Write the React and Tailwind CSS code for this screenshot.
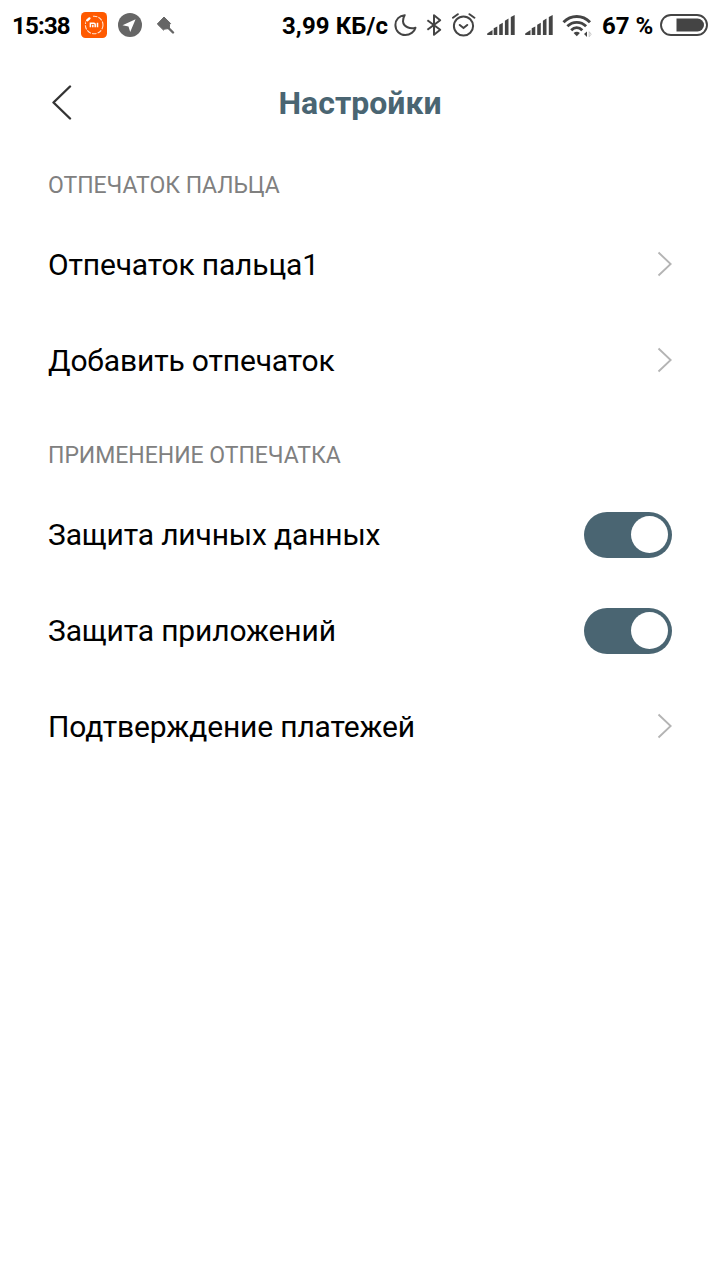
function SignalIcon() {
  return (
    <svg className="h-[22px] w-7" viewBox="0 0 28 22" fill="#444">
      <path d="M.2 21v-1.5L5.5 16v5z" />
      <path d="M6.7 14.3l3.6-1.8V21H6.7z" />
      <path d="M12.2 10.7l3.6-2V21h-3.6z" />
      <path d="M17.9 6.7l3.6-2.1V21h-3.6z" />
      <path d="M23.8 3l3.9-2v20h-3.9z" />
    </svg>
  );
}

function MiIcon() {
  return (
    <svg className="ml-[9px] size-[26px]" viewBox="0 0 26 26" fill="none">
      <rect width="26" height="26" rx="4.5" fill="#ff5a00" />
      <circle cx="13.2" cy="13" r="8.8" stroke="#ffe3d2" strokeWidth="1.1" strokeDasharray="4.5 1.2" />
      <path d="M4 4h8L5 12z" fill="#ff5a00" />
      <path d="M6.2 8.3l2.2-1.9" stroke="#fff" strokeWidth="2.4" strokeLinecap="round" />
      <path d="M9.4 15.2v-4h3.5q1.3 0 1.3 1.2v2.8M11.8 12.7v2.5M16.5 10.7v4.5" stroke="#fff" strokeWidth="1.5" />
    </svg>
  );
}

function TelegramIcon() {
  return (
    <svg className="ml-[11px] size-6" viewBox="0 0 24 24">
      <circle cx="12" cy="12" r="12" fill="#666" />
      <path d="M17.6 6.2L4.5 12.3l6 1.2 1.7 5.6z" fill="#fff" />
    </svg>
  );
}

function PinIcon() {
  return (
    <svg className="ml-[14px] h-[18px] w-[19px]" viewBox="0 0 19 18">
      <path d="M8 1l6.6 6.5-1 1.1-.4 3.9-4.5.6-1.2 1L1.3 8z" fill="#666" stroke="#666" strokeLinejoin="round" />
      <path d="M12 11.5l5 5" stroke="#666" strokeWidth="2.4" strokeLinecap="round" />
    </svg>
  );
}

function MoonIcon() {
  return (
    <svg className="ml-[5px] size-6" viewBox="0 0 24 24" fill="none">
      <path
        d="M10.7 2.2C5.5 2.5 1.4 6.5 1.4 12c0 5.8 4.4 10 9.8 10 5 0 9.2-3.1 10.3-7.3-5.1 1.7-12.1-.8-12.5-6.3-.1-2.5.7-4.6 1.7-6.2z"
        stroke="#444" strokeWidth="2" strokeLinejoin="round"
      />
    </svg>
  );
}

function BluetoothIcon() {
  return (
    <svg className="ml-2 h-6 w-4" viewBox="0 0 16 24" fill="none">
      <path d="M1.4 7.3l12.8 9.5L8 21.8V2.2l6.2 5L1.4 16.8" stroke="#444" strokeWidth="2" strokeLinejoin="round" />
    </svg>
  );
}

function AlarmIcon() {
  return (
    <svg className="ml-2.5 size-6" viewBox="0 0 24 24" fill="none" stroke="#444" strokeWidth="2">
      <circle cx="11.5" cy="13" r="9.6" />
      <path d="M.9 4.7L5.8 1.2M22.4 4.7l-4.9-3.5M7.8 12l3.7 3 3.7-3" strokeLinecap="round" />
    </svg>
  );
}

function WifiIcon() {
  return (
    <svg className="ml-[9px] h-6 w-[30px]" viewBox="0 0 30 24" fill="none">
      <g stroke="#444" strokeWidth="2.9">
        <path d="M1.5 9.2C9 1.5 20.5 1.5 28 9.2" />
        <path d="M5.4 13.3c5.4-5.2 13.3-5.2 18.7 0" />
        <path d="M9.2 17.2c3.3-3.2 7.8-3.2 11.1 0" />
      </g>
      <path d="M11.6 20c2.2-1.7 4.2-1.7 6.3 0l-3.1 3.3z" fill="#444" />
      <path d="M25 18.5v5.4L22 21z" fill="#444" />
      <path d="M27.2 18.7v5l2-2.5z" stroke="#bbb" strokeWidth=".8" />
    </svg>
  );
}

function BatteryIcon() {
  return (
    <svg className="ml-[7px] h-[22px] w-12" viewBox="0 0 48 22">
      <rect x="1" y="1" width="46" height="20" rx="10" fill="none" stroke="#444" strokeWidth="1.9" />
      <path d="M16.5 4.5h21a6.5 6.5 0 010 13h-21z" fill="#444" />
    </svg>
  );
}

function StatusBar() {
  return (
    <div className="flex h-[50px] items-center pl-3 pr-3 text-[24px] font-bold text-black">
      <span className="w-[60px] whitespace-nowrap pt-0.5 tracking-[-0.8px]">15:38</span>
      <MiIcon />
      <TelegramIcon />
      <PinIcon />
      <div className="ml-auto flex items-center">
        <span className="w-[107px] whitespace-nowrap pt-0.5 tracking-[0.1px]">3,99 КБ/с</span>
        <MoonIcon />
        <BluetoothIcon />
        <AlarmIcon />
        <div className="ml-[11px] flex gap-2.5">
          <SignalIcon />
          <SignalIcon />
        </div>
        <WifiIcon />
        <span className="ml-2.5 w-[51px] whitespace-nowrap pt-0.5">67 %</span>
        <BatteryIcon />
      </div>
    </div>
  );
}

function Chevron() {
  return (
    <svg className="mb-0.5 h-[26px] w-4" viewBox="0 0 16 26" fill="none">
      <path d="M2.5 1.5L14.7 13 2.5 24.5" stroke="#b4b4b4" strokeWidth="1.9" />
    </svg>
  );
}

function Toggle() {
  return (
    <button type="button" className="mb-px flex h-[46px] w-[88px] items-center justify-end rounded-full bg-[#4a6572] pr-1">
      <span className="size-[37px] rounded-full bg-white" />
    </button>
  );
}

function Row({ title, toggle }) {
  return (
    <div className="flex h-24 items-center justify-between">
      <span className="pb-0.5 text-[30px] tracking-[-0.15px] text-black">{title}</span>
      {toggle ? <Toggle /> : <Chevron />}
    </div>
  );
}

function Section({ title, children }) {
  return (
    <section>
      <h2 className="pb-[15px] pt-[31px] text-[23px] leading-8 tracking-[-0.03px] text-[#808080]">{title}</h2>
      {children}
    </section>
  );
}

export default function App() {
  return (
    <div className="h-[1280px] w-[720px] overflow-hidden bg-white font-['Roboto',sans-serif]">
      <StatusBar />
      <header className="flex h-[89px] items-center px-12 pt-[15px]">
        <svg className="h-9 w-6" viewBox="0 0 24 36" fill="none">
          <path d="M22 2.5L5.5 18.5 22 34.5" stroke="#333" strokeWidth="2.4" strokeLinecap="round" strokeLinejoin="round" />
        </svg>
        <h1 className="flex-1 pr-6 pt-0.5 text-center text-[32px] font-bold text-[#4a6572]">Настройки</h1>
      </header>
      <main className="px-12">
        <Section title="ОТПЕЧАТОК ПАЛЬЦА">
          <Row title="Отпечаток пальца1" />
          <Row title="Добавить отпечаток" />
        </Section>
        <Section title="ПРИМЕНЕНИЕ ОТПЕЧАТКА">
          <Row title="Защита личных данных" toggle />
          <Row title="Защита приложений" toggle />
          <Row title="Подтверждение платежей" />
        </Section>
      </main>
    </div>
  );
}
